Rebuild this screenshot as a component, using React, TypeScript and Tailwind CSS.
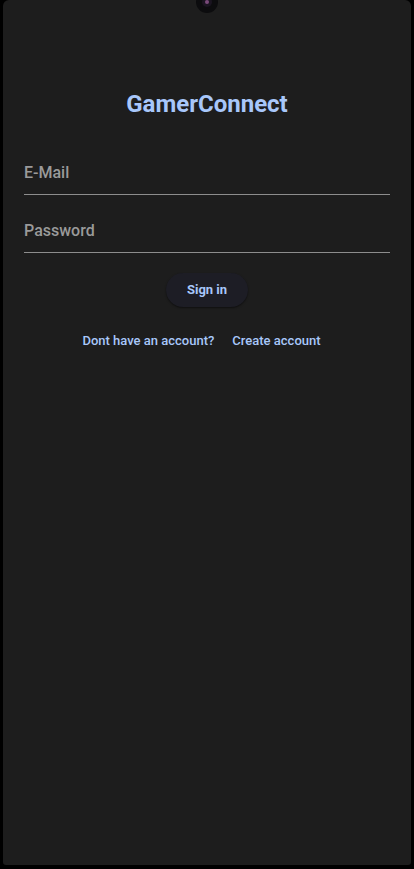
import { useState } from 'react'

function Camera() {
  return (
    <div className="absolute left-1/2 top-[-9px] -translate-x-1/2 w-[22px] h-[22px] rounded-full bg-[#0c0c0e] flex items-center justify-center">
      <div className="w-[10px] h-[10px] rounded-full bg-[#1a1420] flex items-center justify-center">
        <div className="w-[4px] h-[4px] rounded-full bg-[#7a4a7a]" />
      </div>
    </div>
  )
}

function Field({ label, type, value, onChange }: { label: string; type: string; value: string; onChange: (v: string) => void }) {
  return (
    <label className="block border-b border-[#8d8d8d] h-[58px] flex items-end pb-[9px]">
      <input
        type={type}
        value={value}
        onChange={(e) => onChange(e.target.value)}
        placeholder={label}
        className="w-full bg-transparent outline-none text-[16px] text-[#e6e6e6] placeholder:text-[#9a9a9a] font-medium"
      />
    </label>
  )
}

export default function App() {
  const [email, setEmail] = useState('')
  const [password, setPassword] = useState('')

  return (
    <div className="min-h-screen h-[869px] bg-black px-[3px] pb-[4px]" style={{ fontFamily: 'Roboto, "Noto Sans", sans-serif' }}>
      <div className="relative h-full bg-[#1d1d1d] rounded-t-[6px] rounded-b-[3px] overflow-hidden">
        <Camera />
        <div className="px-[21px] pt-[89px]">
          <h1 className="text-center text-[24px] leading-[30px] font-bold text-[#a8c7fa]">GamerConnect</h1>
          <div className="mt-[18px]">
            <Field label="E-Mail" type="email" value={email} onChange={setEmail} />
            <Field label="Password" type="password" value={password} onChange={setPassword} />
          </div>
          <div className="flex justify-center mt-[20px]">
            <button className="h-[34px] px-[21px] rounded-full bg-[#1d1d25] shadow-[0_1px_2px_rgba(0,0,0,0.5)] text-[13px] font-bold text-[#a8c7fa]">
              Sign in
            </button>
          </div>
          <div className="flex justify-center gap-[18px] mt-[24px] pr-[11px] text-[13px] font-medium text-[#a8c7fa]">
            <span>Dont have an account?</span>
            <button>Create account</button>
          </div>
        </div>
      </div>
    </div>
  )
}
